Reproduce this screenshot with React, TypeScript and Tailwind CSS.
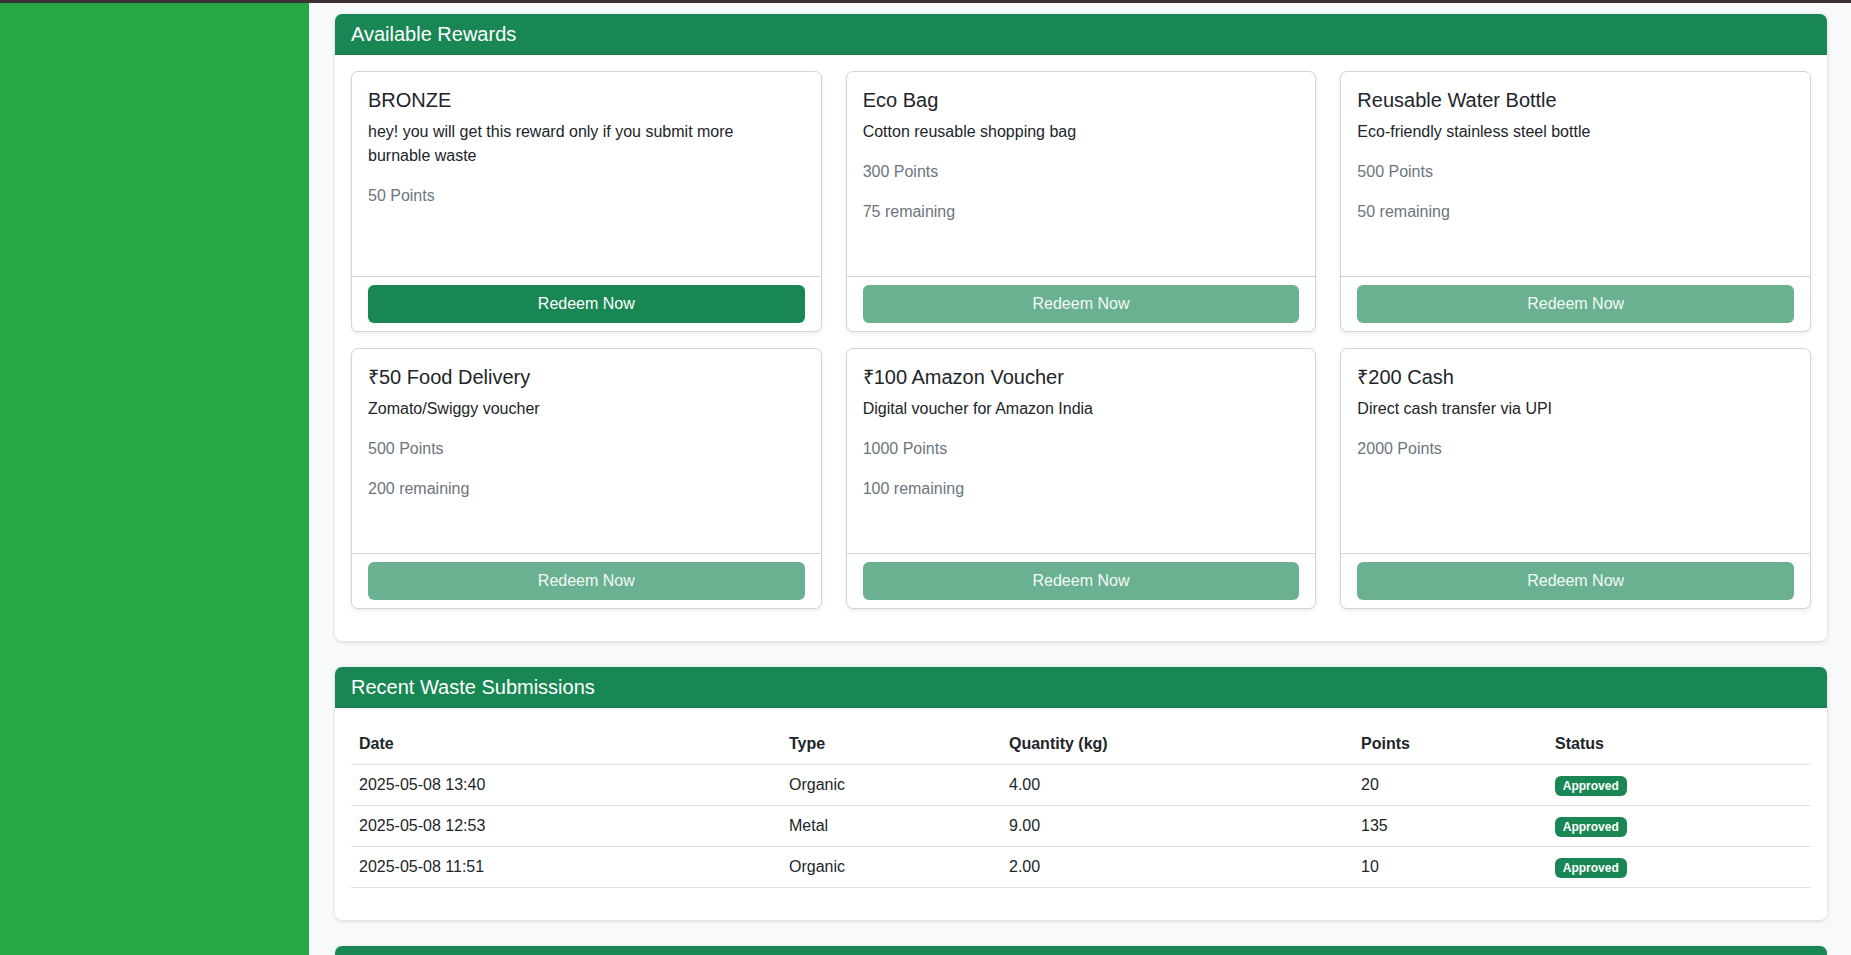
import React from "react";

type Reward = {
  title: string;
  desc: string;
  points: string;
  remaining?: string;
  enabled: boolean;
};

const rewards: Reward[] = [
  {
    title: "BRONZE",
    desc: "hey! you will get this reward only if you submit more burnable waste",
    points: "50 Points",
    enabled: true,
  },
  {
    title: "Eco Bag",
    desc: "Cotton reusable shopping bag",
    points: "300 Points",
    remaining: "75 remaining",
    enabled: false,
  },
  {
    title: "Reusable Water Bottle",
    desc: "Eco-friendly stainless steel bottle",
    points: "500 Points",
    remaining: "50 remaining",
    enabled: false,
  },
  {
    title: "₹50 Food Delivery",
    desc: "Zomato/Swiggy voucher",
    points: "500 Points",
    remaining: "200 remaining",
    enabled: false,
  },
  {
    title: "₹100 Amazon Voucher",
    desc: "Digital voucher for Amazon India",
    points: "1000 Points",
    remaining: "100 remaining",
    enabled: false,
  },
  {
    title: "₹200 Cash",
    desc: "Direct cash transfer via UPI",
    points: "2000 Points",
    enabled: false,
  },
];

const submissions = [
  { date: "2025-05-08 13:40", type: "Organic", qty: "4.00", points: "20" },
  { date: "2025-05-08 12:53", type: "Metal", qty: "9.00", points: "135" },
  { date: "2025-05-08 11:51", type: "Organic", qty: "2.00", points: "10" },
];

function RewardCard({ r }: { r: Reward }) {
  return (
    <div className="flex flex-col rounded-[7px] border border-[#d3d4d5] bg-white shadow-[0_2px_4px_rgba(0,0,0,0.075)]">
      <div className="h-[204px] p-4">
        <h5 className="mb-2 text-[20px] leading-[24px] text-[#212529]">{r.title}</h5>
        <p className="mb-4 max-w-[390px] text-[16px] leading-6 text-[#212529]">{r.desc}</p>
        <p className="mb-4 text-[16px] leading-6 text-[#6c757d]">{r.points}</p>
        {r.remaining && (
          <p className="mb-4 text-[16px] leading-6 text-[#6c757d]">{r.remaining}</p>
        )}
      </div>
      <div className="border-t border-[#d3d4d5] px-4 py-2">
        {r.enabled ? (
          <button className="h-[38px] w-full rounded-[6px] bg-[#198754] text-[16px] text-white">
            Redeem Now
          </button>
        ) : (
          <button className="h-[38px] w-full rounded-[6px] bg-[#69b190] text-[16px] text-[#f5faf7]">
            Redeem Now
          </button>
        )}
      </div>
    </div>
  );
}

function CardHeader({ children }: { children?: React.ReactNode }) {
  return (
    <div className="h-[41px] rounded-t-[7px] border-b border-[#167a4b] bg-[#198754] px-4 py-2 text-[20px] leading-[24px] text-white">
      {children}
    </div>
  );
}

export default function App() {
  return (
    <div className="flex h-screen flex-col overflow-hidden font-['Liberation_Sans',Arial,sans-serif] text-[16px] text-[#212529]">
      <div className="h-[3px] w-full shrink-0 bg-[#3d3034]" />
      <div className="flex min-h-0 flex-1">
        <aside className="w-[309px] shrink-0 bg-[#28a745]" />
        <main className="flex-1 bg-[#f8f9fa] pl-[26px] pr-[24px] pt-[11px]">
          <div className="flex flex-col gap-[26px]">
            <section className="rounded-[7px] bg-white shadow-[0_1px_4px_rgba(0,0,0,0.15)]">
              <CardHeader>Available Rewards</CardHeader>
              <div className="grid grid-cols-3 gap-x-6 gap-y-4 px-4 pb-8 pt-4">
                {rewards.map((r) => (
                  <RewardCard key={r.title} r={r} />
                ))}
              </div>
            </section>

            <section className="rounded-[7px] bg-white shadow-[0_1px_4px_rgba(0,0,0,0.15)]">
              <CardHeader>Recent Waste Submissions</CardHeader>
              <div className="px-4 pb-4 pt-4">
                <table className="mb-4 w-full table-fixed border-collapse text-left">
                  <colgroup>
                    <col className="w-[430px]" />
                    <col className="w-[220px]" />
                    <col className="w-[352px]" />
                    <col className="w-[194px]" />
                    <col />
                  </colgroup>
                  <thead>
                    <tr className="border-b border-[#dee2e6]">
                      <th className="px-2 py-2 font-bold leading-6">Date</th>
                      <th className="px-2 py-2 font-bold leading-6">Type</th>
                      <th className="px-2 py-2 font-bold leading-6">Quantity (kg)</th>
                      <th className="px-2 py-2 font-bold leading-6">Points</th>
                      <th className="px-2 py-2 font-bold leading-6">Status</th>
                    </tr>
                  </thead>
                  <tbody>
                    {submissions.map((s) => (
                      <tr key={s.date} className="border-b border-[#dee2e6]">
                        <td className="px-2 py-2 leading-6">{s.date}</td>
                        <td className="px-2 py-2 leading-6">{s.type}</td>
                        <td className="px-2 py-2 leading-6">{s.qty}</td>
                        <td className="px-2 py-2 leading-6">{s.points}</td>
                        <td className="px-2 py-2 leading-6">
                          <span className="inline-block rounded-[6px] bg-[#198754] px-[7.8px] py-[4.2px] text-[12px] font-bold leading-none text-white">
                            Approved
                          </span>
                        </td>
                      </tr>
                    ))}
                  </tbody>
                </table>
              </div>
            </section>

            <section className="rounded-[7px] bg-white shadow-[0_1px_4px_rgba(0,0,0,0.15)]">
              <CardHeader />
              <div className="h-[200px]" />
            </section>
          </div>
        </main>
      </div>
    </div>
  );
}
